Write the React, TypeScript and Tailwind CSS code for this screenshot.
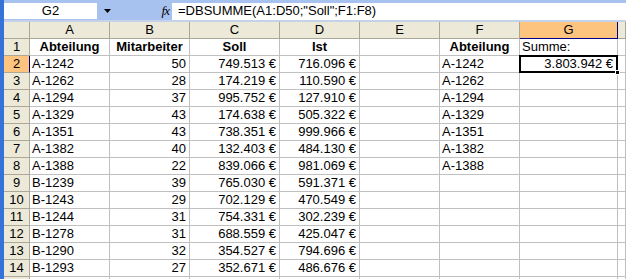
import React from "react";

const data: [string, string, string, string][] = [
  ["A-1242", "50", "749.513 €", "716.096 €"],
  ["A-1262", "28", "174.219 €", "110.590 €"],
  ["A-1294", "37", "995.752 €", "127.910 €"],
  ["A-1329", "43", "174.638 €", "505.322 €"],
  ["A-1351", "43", "738.351 €", "999.966 €"],
  ["A-1382", "40", "132.403 €", "484.130 €"],
  ["A-1388", "22", "839.066 €", "981.069 €"],
  ["B-1239", "39", "765.030 €", "591.371 €"],
  ["B-1243", "29", "702.129 €", "470.549 €"],
  ["B-1244", "31", "754.331 €", "302.239 €"],
  ["B-1278", "31", "688.559 €", "425.047 €"],
  ["B-1290", "32", "354.527 €", "794.696 €"],
  ["B-1293", "27", "352.671 €", "486.676 €"],
];

const fList = ["A-1242", "A-1262", "A-1294", "A-1329", "A-1351", "A-1382", "A-1388"];

const cell = "h-[17px] border-r border-b border-[#c0c0c0] bg-white leading-[16px] whitespace-nowrap overflow-hidden";
const colHead = "h-[17px] border-r border-b border-[#aca899] bg-[#ece9d8] leading-[16px] text-center";
const rowHead = "h-[17px] border-r border-b border-[#aca899] bg-[#ece9d8] leading-[16px] text-center";

export default function App() {
  const cols = ["A", "B", "C", "D", "E", "F", "G", ""];
  return (
    <div
      className="flex w-[626px] h-[279px] overflow-hidden bg-white text-[13px] text-black"
      style={{ fontFamily: '"Liberation Sans", Arial, sans-serif' }}
    >
      <div className="w-[4px] shrink-0 bg-[#3573d9]" />
      <div className="flex flex-col flex-1 min-w-0">
        {/* formula bar */}
        <div className="h-[22px] shrink-0 bg-[#a8c2f0] pt-[3px] border-b-2 border-[#c5d3ea] flex">
          <div className="w-[93px] h-[16px] bg-white text-center leading-[16px]">G2</div>
          <div className="w-[20px] h-[16px] flex items-center justify-center">
            <svg width="7" height="4" viewBox="0 0 7 4">
              <path d="M0 0h7L3.5 4z" fill="#000" />
            </svg>
          </div>
          <div className="w-[55px] h-[16px] flex items-center justify-end pr-[3px]">
            <span
              className="italic text-[13px] leading-[16px] tracking-[-1px]"
              style={{ fontFamily: '"Liberation Serif", serif' }}
            >
              fx
            </span>
          </div>
          <div className="flex-1 h-[17px] bg-white pl-[6px] leading-[16px] whitespace-nowrap">
            =DBSUMME(A1:D50;"Soll";F1:F8)
          </div>
        </div>
        {/* sheet */}
        <div className="grid grid-cols-[26px_80px_80px_90px_80px_80px_80px_98px_1fr]">
          <div className={colHead} />
          {cols.map((c, i) =>
            c === "G" ? (
              <div key={i} className="h-[17px] border-r border-b border-[#000080] bg-[#fdc47f] leading-[16px] text-center">
                G
              </div>
            ) : (
              <div key={i} className={colHead}>
                {c}
              </div>
            )
          )}
          {/* row 1 */}
          <div className={rowHead}>1</div>
          <div className={`${cell} text-center font-bold`}>Abteilung</div>
          <div className={`${cell} text-center font-bold`}>Mitarbeiter</div>
          <div className={`${cell} text-center font-bold`}>Soll</div>
          <div className={`${cell} text-center font-bold`}>Ist</div>
          <div className={cell} />
          <div className={`${cell} text-center font-bold`}>Abteilung</div>
          <div className={`${cell} pl-[2px]`}>Summe:</div>
          <div className={cell} />
          {data.map((r, i) => {
            const n = i + 2;
            return (
              <React.Fragment key={n}>
                {n === 2 ? (
                  <div className="h-[17px] border-r border-b border-r-[#000080] border-b-[#aca899] bg-[#fdc47f] leading-[16px] text-center">
                    {n}
                  </div>
                ) : (
                  <div className={rowHead}>{n}</div>
                )}
                <div className={`${cell} pl-[2px]`}>{r[0]}</div>
                <div className={`${cell} text-right pr-[3px]`}>{r[1]}</div>
                <div className={`${cell} text-right pr-[3px]`}>{r[2]}</div>
                <div className={`${cell} text-right pr-[3px]`}>{r[3]}</div>
                <div className={cell} />
                <div className={`${cell} pl-[2px]`}>{fList[i] ?? ""}</div>
                {n === 2 ? (
                  <div className={`${cell} relative overflow-visible text-right pr-[4px]`}>
                    3.803.942 €
                    <div className="absolute -left-[1px] -top-[1px] -right-[1px] -bottom-[1px] border-2 border-black" />
                    <div className="absolute -right-[3px] -bottom-[3px] w-[5px] h-[5px] bg-black border border-white" />
                  </div>
                ) : (
                  <div className={cell} />
                )}
                <div className={cell} />
              </React.Fragment>
            );
          })}
          <div className={rowHead} />
          {cols.map((_, i) => (
            <div key={i} className={cell} />
          ))}
        </div>
      </div>
    </div>
  );
}
